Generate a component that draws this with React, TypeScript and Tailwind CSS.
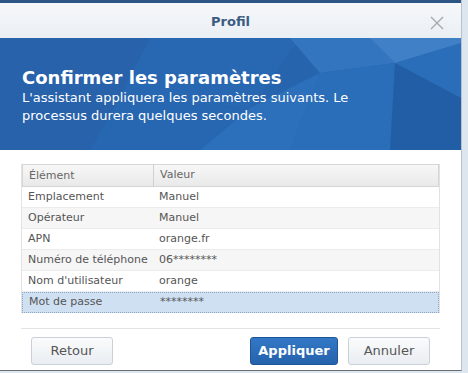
import React from 'react';

const ROWS = [
  ['Emplacement', 'Manuel'],
  ['Opérateur', 'Manuel'],
  ['APN', 'orange.fr'],
  ['Numéro de téléphone', '06********'],
  ["Nom d'utilisateur", 'orange'],
  ['Mot de passe', '********'],
];

const FONT = { fontFamily: '"DejaVu Sans", Verdana, sans-serif' };

function BannerArt() {
  // low-poly facets behind the heading
  return (
    <svg className="absolute inset-0 h-full w-full" viewBox="0 0 461 112" preserveAspectRatio="none">
      <rect width="461" height="112" fill="#2664ae" />
      <polygon points="0,0 150,0 90,112 0,112" fill="#2762ab" />
      <polygon points="150,0 300,0 250,70 120,60" fill="#2867b2" />
      <polygon points="290,0 370,0 395,25 320,35" fill="#3475bf" />
      <polygon points="320,35 395,25 461,5 461,60 390,112 290,112" fill="#2a6db8" />
      <polygon points="370,0 461,0 461,5 395,25" fill="#3f80c6" />
      <polygon points="250,70 320,35 290,112 200,112" fill="#2c6fbb" />
      <polygon points="395,25 461,60 461,112 390,112" fill="#225ea6" />
      <polygon points="120,60 250,70 200,112 90,112" fill="#2766b0" />
    </svg>
  );
}

export default function App() {
  return (
    <div className="relative h-[373px] w-[468px] overflow-hidden bg-[#dde5ee]" style={FONT}>
      <div className="flex h-[371px] w-[462px] flex-col border-r border-b border-r-[#b9c2cc] border-b-[#6b6f74] bg-white">
        <div className="h-[3px] bg-[#2d5585]" />
        <div className="relative flex h-[35px] items-center justify-center bg-gradient-to-b from-[#f6f8fb] to-[#eaeff4] pt-[3px]">
          <span className="text-[13px] font-bold text-[#3c5b82]">Profil</span>
          <svg className="absolute right-[17px] top-[13px]" width="14" height="14" viewBox="0 0 14 14">
            <path d="M1 1L13 13M13 1L1 13" stroke="#a3a9b0" strokeWidth="1.4" />
          </svg>
        </div>
        <div className="relative h-[112px]">
          <BannerArt />
          <div className="relative px-[22px] pt-[29px] text-white">
            <div className="text-[18px] font-bold leading-[22px]">Confirmer les paramètres</div>
            <div className="text-[13px] leading-[18px]">
              L'assistant appliquera les paramètres suivants. Le
              <br />
              processus durera quelques secondes.
            </div>
          </div>
        </div>
        <div className="px-[21px] pt-[14px]">
          <div className="border-x border-[#e2e2e2] text-[11px] text-[#555]">
            <div className="flex h-[23px] items-center border border-[#d6d6d6] bg-gradient-to-b from-[#f7f7f7] to-[#e9e9e9] text-[#666]">
              <div className="w-[131px] border-r border-[#d0d0d0] pl-[6px] leading-[22px]">Élément</div>
              <div className="pl-[6px]">Valeur</div>
            </div>
            {ROWS.map(([k, v], i) => {
              const sel = i === ROWS.length - 1;
              return (
                <div
                  key={k}
                  className={
                    sel
                      ? 'flex h-[21px] items-center border border-dotted border-[#8aa6c6] bg-[#cfe0f3]'
                      : i % 2 === 1
                        ? 'flex h-[21px] items-center border-b border-[#ececec] bg-[#f6f6f6]'
                        : 'flex h-[21px] items-center border-b border-[#ececec] bg-white'
                  }
                >
                  <div className="w-[131px] pl-[6px]">{k}</div>
                  <div className="pl-[6px]">{v}</div>
                </div>
              );
            })}
          </div>
        </div>
        <div className="mx-[21px] mt-[15px] border-t border-[#e3e3e3]" />
        <div className="flex items-center px-[31px] pt-[8px] text-[13px]">
          <button className="h-[28px] w-[82px] rounded-[3px] border border-[#c9d0d8] bg-gradient-to-b from-[#fafbfc] to-[#e9edf2] text-[#555]">
            Retour
          </button>
          <div className="flex-1" />
          <button className="h-[28px] w-[88px] rounded-[3px] border border-[#1e559a] bg-gradient-to-b from-[#3378c6] to-[#2562ab] font-bold text-white">
            Appliquer
          </button>
          <button className="ml-[10px] h-[28px] w-[82px] rounded-[3px] border border-[#c9d0d8] bg-gradient-to-b from-[#fafbfc] to-[#e9edf2] text-[#555]">
            Annuler
          </button>
        </div>
      </div>
    </div>
  );
}
